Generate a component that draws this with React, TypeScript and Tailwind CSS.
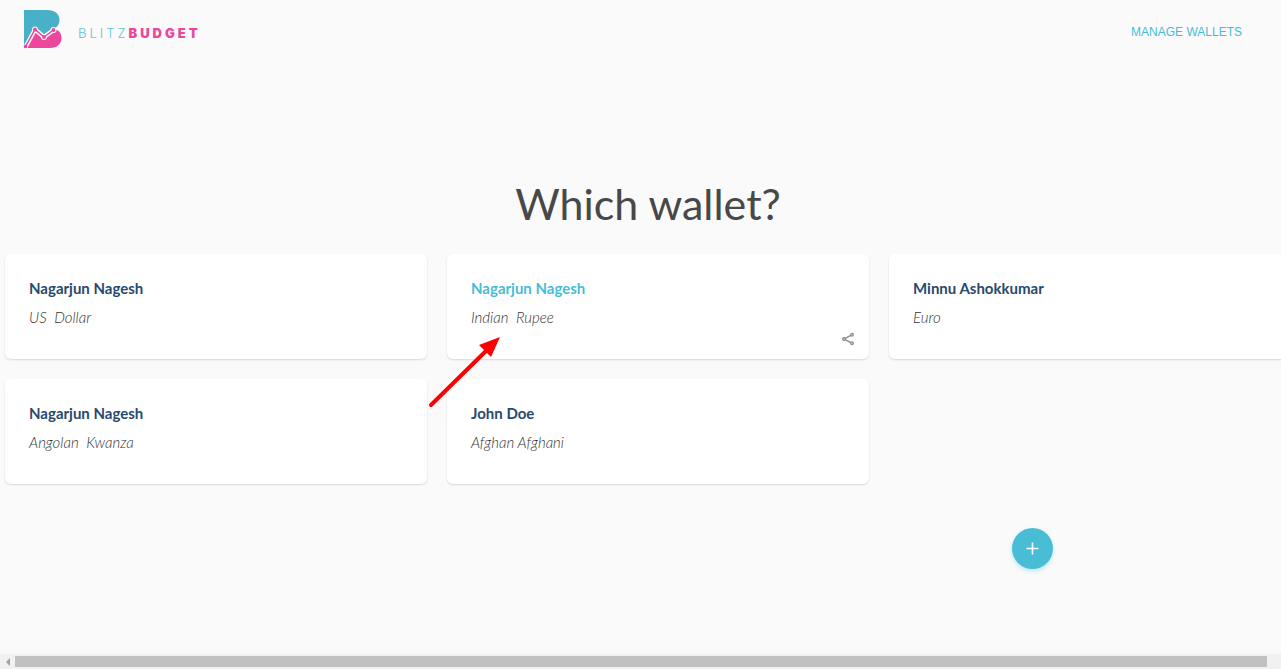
import React from "react";

type Wallet = { name: string; currency: string; active?: boolean };

const wallets: Wallet[] = [
  { name: "Nagarjun Nagesh", currency: "US  Dollar" },
  { name: "Nagarjun Nagesh", currency: "Indian  Rupee", active: true },
  { name: "Minnu Ashokkumar", currency: "Euro" },
  { name: "Nagarjun Nagesh", currency: "Angolan  Kwanza" },
  { name: "John Doe", currency: "Afghan Afghani" },
];

function LogoMark() {
  return (
    <svg className="h-10 w-10" viewBox="0 0 40 40" aria-hidden="true">
      <path d="M1 1H24C32 1 36.5 5 36.5 11C36.5 15 34.5 18 31 20L1 39Z" fill="#48b1c8" />
      <path d="M1 39L12 21L21 28L31 20C36 21 38.5 24 38.5 29C38.5 35 34 39 27 39Z" fill="#ec479c" />
      <path d="M2.5 38L12 20.5L21 28L30.5 21" fill="none" stroke="#fafafa" strokeWidth="4.4" strokeLinejoin="round" />
      <circle cx="12" cy="20.5" r="3" fill="#fafafa" />
      <circle cx="21" cy="28" r="3" fill="#fafafa" />
      <circle cx="30.5" cy="21" r="3" fill="#fafafa" />
      <path d="M2.5 37.5L12 20.5L21 28L30.5 21" fill="none" stroke="#ec479c" strokeWidth="1.5" />
      <g fill="#ec479c">
        <circle cx="2.5" cy="37.5" r="1.8" />
        <circle cx="12" cy="20.5" r="1.9" />
        <circle cx="21" cy="28" r="1.9" />
        <circle cx="30.5" cy="21" r="1.9" />
      </g>
    </svg>
  );
}

function ShareIcon() {
  return (
    <svg className="h-[14px] w-[14px]" viewBox="0 0 14 14" fill="none" stroke="#8d8d8d" strokeWidth="1.4" aria-hidden="true">
      <path d="M4.2 6.3L9.8 3.4M4.2 7.7L9.8 10.6" />
      <circle cx="3" cy="7" r="1.3" />
      <circle cx="11" cy="2.8" r="1.3" />
      <circle cx="11" cy="11.2" r="1.3" />
    </svg>
  );
}

function WalletCard({ wallet }: { wallet: Wallet }) {
  return (
    <article className="relative h-[105px] rounded-md bg-white px-6 pt-6 shadow-[0_1px_2px_rgba(0,0,0,0.14)]">
      <h2 className={wallet.active ? "text-[15px] leading-5 font-bold text-[#46bdd6]" : "text-[15px] leading-5 font-bold text-[#28496f]"}>
        {wallet.name}
      </h2>
      <p className="mt-2 text-[15px] leading-[22px] font-light whitespace-pre text-[#333] italic">{wallet.currency}</p>
      {wallet.active && (
        <>
          <button aria-label="Share wallet" className="absolute right-[14px] bottom-[13px]">
            <ShareIcon />
          </button>
          <svg className="pointer-events-none absolute top-[82px] -left-[19px] z-10 h-[73px] w-[74px]" viewBox="0 0 74 73" aria-hidden="true">
            <path d="M3 69L59 14" stroke="#f00" strokeWidth="4" strokeLinecap="round" />
            <path d="M72 1L51 9L63 21Z" fill="#f00" />
          </svg>
        </>
      )}
    </article>
  );
}

export default function App() {
  return (
    <div className="flex min-h-screen flex-col overflow-x-hidden bg-[#fafafa] font-[Lato,sans-serif]">
      <header className="flex items-start justify-between pt-[9px] pr-[39px] pl-[23px]">
        <a href="#home" aria-label="BlitzBudget" className="flex items-center gap-[15px]">
          <LogoMark />
          <span className="mt-[7px] flex font-[Inter,sans-serif] text-[13px] leading-4 tracking-[3px]">
            <span className="font-light text-[#62c5d5]">BLITZ</span>
            <span className="font-black text-[#ec479c]">BUDGET</span>
          </span>
        </a>
        <a href="#wallets" className="mt-[14px] font-['Liberation_Sans',sans-serif] text-xs leading-[18px] text-[#46bdd6]">
          MANAGE WALLETS
        </a>
      </header>
      <main className="flex-1 pl-[5px]">
        <h1 className="mt-[125px] pl-[10px] text-center text-[43px] leading-[60px] text-[#484848]">Which wallet?</h1>
        <section aria-label="Wallets" className="mt-5 -mr-[30px] grid grid-cols-3 gap-5">
          {wallets.map((wallet) => (
            <WalletCard key={wallet.currency} wallet={wallet} />
          ))}
        </section>
        <div className="mt-11 flex justify-end pr-[228px]">
          <button aria-label="Add wallet" className="flex h-[41px] w-[41px] items-center justify-center rounded-full bg-[#4abdd6] shadow-[0_2px_4px_rgba(74,189,214,0.35)]">
            <svg className="h-[13px] w-[13px]" viewBox="0 0 13 13" stroke="#fff" strokeWidth="1.6" aria-hidden="true">
              <path d="M6.5 0.5V12.5M0.5 6.5H12.5" />
            </svg>
          </button>
        </div>
      </main>
      <footer className="flex h-[15px] items-center bg-[#f1f1f1] pr-[14px]">
        <button aria-label="Scroll left" className="flex h-[15px] w-[15px] items-center justify-center">
          <svg className="h-2 w-1" viewBox="0 0 4 8" fill="#a3a3a3" aria-hidden="true">
            <path d="M4 0V8L0 4Z" />
          </svg>
        </button>
        <div className="h-[11px] flex-1 bg-[#c1c1c1]" />
      </footer>
    </div>
  );
}
